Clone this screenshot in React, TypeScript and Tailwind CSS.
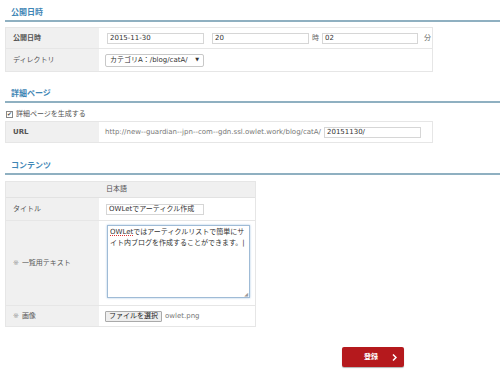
import React from 'react';

const font = "font-['DejaVu_Sans','Noto_Sans_CJK_JP',sans-serif]";

const Heading: React.FC<{ title: string; className?: string }> = ({ title, className }) => (
  <div className={`ml-[5px] border-b-2 border-[#8fb0c1] pl-[6px] pb-[1px] ${className ?? ''}`}>
    <h2 className="text-[8px] leading-[12px] font-bold text-[#3f86b5]">{title}</h2>
  </div>
);

const Input: React.FC<{ value: string; className: string }> = ({ value, className }) => (
  <div className={`h-[11px] border border-[#d6d6d6] bg-white px-[2px] text-[7px] leading-[9px] text-[#333] ${className}`}>
    {value}
  </div>
);

const Label: React.FC<{ children: React.ReactNode; bold?: boolean }> = ({ children, bold }) => (
  <div className={`w-[93px] shrink-0 bg-[#f0f0f0] pl-[7px] flex items-center text-[7px] text-[#555] ${bold ? 'font-bold' : ''}`}>
    {children}
  </div>
);

const App: React.FC = () => {
  return (
    <div className={`w-[500px] h-[381px] bg-white pt-[7px] ${font}`}>
      <Heading title="公開日時" />

      <div className="ml-[5px] mt-[5px] w-[428px] border border-[#e6e6e6]">
        <div className="flex h-[21px] border-b border-[#e6e6e6]">
          <Label bold>公開日時</Label>
          <div className="flex items-center pl-[8px] text-[7px] text-[#666]">
            <Input value="2015-11-30" className="w-[97px]" />
            <Input value="20" className="w-[97px] ml-[8px]" />
            <span className="ml-[3px] mr-[3px]">時</span>
            <Input value="02" className="w-[96px]" />
            <span className="ml-[6px]">分</span>
          </div>
        </div>
        <div className="flex h-[22px]">
          <Label>ディレクトリ</Label>
          <div className="flex items-center pl-[6px]">
            <div className="flex h-[13px] w-[99px] items-center justify-between rounded-[2px] border border-[#c8c8c8] bg-white px-[4px] text-[7px] text-[#333]">
              <span>カテゴリA：/blog/catA/</span>
              <span className="text-[5px]">▼</span>
            </div>
          </div>
        </div>
      </div>

      <Heading title="詳細ページ" className="mt-[16px]" />

      <div className="ml-[6px] mt-[6px] flex h-[10px] items-center gap-[3px] text-[7px] text-[#555]">
        <span className="flex h-[7px] w-[7px] items-center justify-center border border-[#888] bg-white text-[6px] leading-none">✔</span>
        <span>詳細ページを生成する</span>
      </div>

      <div className="ml-[5px] mt-[2px] w-[428px] border border-[#e6e6e6]">
        <div className="flex h-[20px]">
          <Label bold>URL</Label>
          <div className="flex items-center pl-[6px] text-[7px] text-[#777]">
            <span>http://new--guardian--jpn--com--gdn.ssl.owlet.work/blog/catA/</span>
            <Input value="20151130/" className="w-[97px] ml-[3px]" />
          </div>
        </div>
      </div>

      <Heading title="コンテンツ" className="mt-[17px]" />

      <div className="ml-[5px] mt-[6px] w-[251px] border border-[#e6e6e6] text-[7px]">
        <div className="flex h-[16px] bg-[#f0f0f0] border-b border-[#e2e2e2]">
          <div className="w-[93px] shrink-0" />
          <div className="flex items-center pl-[7px] text-[#555]">日本語</div>
        </div>
        <div className="flex h-[23px] border-b border-[#e6e6e6]">
          <Label>タイトル</Label>
          <div className="flex items-center pl-[7px]">
            <Input value="OWLetでアーティクル作成" className="w-[98px]" />
          </div>
        </div>
        <div className="flex h-[85px] border-b border-[#e6e6e6]">
          <Label>
            <span className="text-[#999] mr-[3px]">※</span>一覧用テキスト
          </Label>
          <div className="pl-[8px] pt-[4px]">
            <div className="relative h-[73px] w-[143px] border border-[#9fbbd6] bg-white px-[2px] pt-[1px] text-[7px] leading-[11px] text-[#333] shadow-[0_0_2px_#a9c6e4]">
              <div className="whitespace-nowrap">
                <span className="underline decoration-dotted decoration-[#d33]">OWLet</span>ではアーティクルリストで簡単にサ
              </div>
              <div className="whitespace-nowrap">イト内ブログを作成することができます。|</div>
              <span className="absolute bottom-0 right-[1px] text-[5px] leading-none text-[#999]">◢</span>
            </div>
          </div>
        </div>
        <div className="flex h-[20px]">
          <Label>
            <span className="text-[#999] mr-[3px]">※</span>画像
          </Label>
          <div className="flex items-center pl-[6px] text-[#777]">
            <span className="flex h-[11px] items-center border border-[#aaa] bg-[#eee] px-[3px] text-[#222] rounded-[1px]">ファイルを選択</span>
            <span className="ml-[3px]">owlet.png</span>
          </div>
        </div>
      </div>

      <div className="mt-[20px] ml-[342px] flex h-[20px] w-[62px] items-center justify-between rounded-[2px] bg-[#b5191d] pl-[22px] pr-[7px] text-white shadow-[0_1px_1px_rgba(0,0,0,0.3)]">
        <span className="text-[7px] font-bold">登録</span>
        <svg width="5" height="7" viewBox="0 0 5 7" fill="none" stroke="white" strokeWidth="1.5">
          <path d="M1 0.5 L4 3.5 L1 6.5" />
        </svg>
      </div>
    </div>
  );
};

export default App;
